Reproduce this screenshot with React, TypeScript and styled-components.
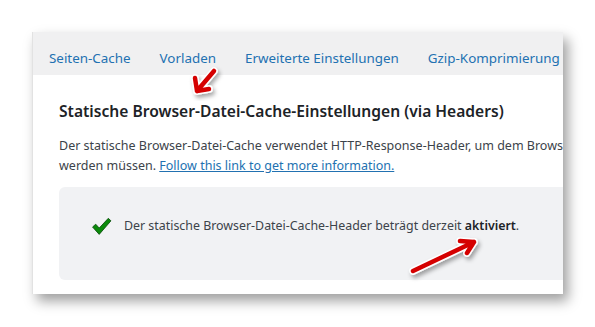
import React from "react";
import styled, { createGlobalStyle } from "styled-components";

const GlobalStyle = createGlobalStyle`
	html, body {
		margin: 0;
		padding: 0;
		background: #ffffff;
	}
	body {
		font-family: "Noto Sans", "Open Sans", sans-serif;
	}
`;

const Page = styled.div`
	position: relative;
	width: 595px;
	height: 327px;
	padding: 32px 0 0 32px;
	box-sizing: border-box;
	overflow: hidden;
`;

const Panel = styled.div`
	width: 531px;
	height: 262px;
	background: #ffffff;
	border-left: 1px solid #e2e2e2;
	box-sizing: border-box;
	overflow: hidden;
	box-shadow: 5px 7px 12px rgba(0, 0, 0, 0.38);
	display: flex;
	flex-direction: column;
`;

const TabBar = styled.nav`
	height: 43px;
	flex-shrink: 0;
	background: #f0f0f1;
	display: flex;
	align-items: center;
	gap: 29px;
	padding: 8px 0 0 16px;
	box-sizing: border-box;
	white-space: nowrap;
`;

const Tab = styled.a`
	font-size: 13.4px;
	color: #2271b1;
	text-decoration: none;
`;

const Content = styled.div`
	padding: 25px 0 0 26px;
	white-space: nowrap;
`;

const Heading = styled.h2`
	margin: 0 0 14px;
	font-size: 15.6px;
	font-weight: 600;
	color: #1d2327;
	line-height: 22px;
`;

const Text = styled.p`
	margin: 0 0 11px;
	font-size: 12.5px;
	line-height: 20px;
	color: #3c434a;
`;

const Link = styled.a`
	color: #2271b1;
	text-decoration: underline;
`;

const Notice = styled.div`
	height: 93px;
	background: #f1f2f4;
	border-radius: 6px 0 0 6px;
	display: flex;
	align-items: flex-start;
	gap: 12px;
	padding: 30px 0 0 32px;
	box-sizing: border-box;
`;

const NoticeText = styled.span`
	font-size: 12.4px;
	line-height: 18px;
	color: #3c434a;
	b {
		font-weight: 600;
		color: #1d2327;
	}
`;

const Overlay = styled.svg`
	position: absolute;
	left: 0;
	top: 0;
	pointer-events: none;
`;

const Check = () => (
	<svg width="21" height="19" viewBox="0 0 20 18">
		<path
			d="M1.5 9.5 L4.5 6.8 L7.8 10.5 L16.5 1.2 L19 3.6 L7.8 16.5 Z"
			fill="#0a8a0a"
			stroke="#0d4d0d"
			strokeWidth="0.8"
			strokeLinejoin="round"
		/>
	</svg>
);

const Arrow = ({ d }: { d: string }) => (
	<g filter="url(#shadow)">
		<path d={d} fill="none" stroke="#ffffff" strokeWidth="7.5" strokeLinecap="round" strokeLinejoin="round" />
		<path d={d} fill="none" stroke="#d50000" strokeWidth="4.5" strokeLinecap="round" strokeLinejoin="round" />
	</g>
);

const App = () => {
	return (
		<Page>
			<GlobalStyle />
			<Panel>
				<TabBar>
					<Tab href="#">Seiten-Cache</Tab>
					<Tab href="#">Vorladen</Tab>
					<Tab href="#">Erweiterte Einstellungen</Tab>
					<Tab href="#">Gzip-Komprimierung</Tab>
				</TabBar>
				<Content>
					<Heading>Statische Browser-Datei-Cache-Einstellungen (via Headers)</Heading>
					<Text>
						Der statische Browser-Datei-Cache verwendet HTTP-Response-Header, um dem Browser mitzuteilen, wie lange Dateien zwischengespeichert
						<br />
						werden müssen. <Link href="#">Follow this link to get more information.</Link>
					</Text>
					<Notice>
						<Check />
						<NoticeText>
							Der statische Browser-Datei-Cache-Header beträgt derzeit <b>aktiviert</b>.
						</NoticeText>
					</Notice>
				</Content>
			</Panel>
			<Overlay width="595" height="327" viewBox="0 0 595 327">
				<defs>
					<filter id="shadow" x="-50%" y="-50%" width="200%" height="200%">
						<feDropShadow dx="2" dy="3" stdDeviation="2" floodColor="#000" floodOpacity="0.35" />
					</filter>
				</defs>
				<Arrow d="M214 71 L197 91 M195 78 L197 91 L209 89" />
				<Arrow d="M413 271 L474 242 M460 241 L474 242 L467 253" />
			</Overlay>
		</Page>
	);
};

export default App;
